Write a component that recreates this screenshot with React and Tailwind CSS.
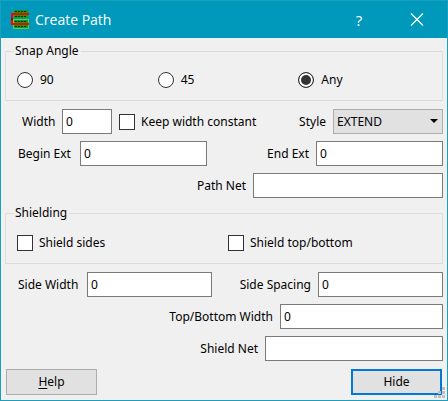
import React from "react";

const fieldClass =
  "h-[25px] min-w-0 rounded-none border border-[#7a7a7a] bg-white px-[3px] text-[12px] leading-4 text-black outline-none";
const boxClass =
  "size-4 shrink-0 appearance-none border border-[#333333] bg-white checked:bg-[#333333]";
const radioClass =
  "size-4 shrink-0 appearance-none rounded-full border border-[#333333] bg-white checked:border-[#333333] checked:bg-[#333333] checked:shadow-[inset_0_0_0_2px_#ffffff]";

function AppIcon() {
  const dots = [16, 19, 22, 25];
  return (
    <svg width="20" height="21" viewBox="10 9 20 21" shapeRendering="crispEdges" aria-hidden="true">
      <rect x="14" y="10" width="14" height="8" fill="#0aa00f" />
      <rect x="13" y="19" width="16" height="10" fill="#5fd03c" />
      <rect x="14" y="20" width="14" height="8" fill="#0aa00f" />
      {[11, 16, 21, 26].map((y) =>
        dots.map((x) => <rect key={x + "-" + y} x={x - 1} y={y} width="2" height="1" fill="#062b08" />)
      )}
      <path d="M29 14H12V24H29" fill="none" stroke="#ff0000" strokeWidth="2" />
      <rect x="11" y="18" width="2" height="2" fill="#7a1010" />
    </svg>
  );
}

function TitleBar() {
  return (
    <header className="flex h-[37px] items-center bg-[#0099bc] pl-[9px] text-white">
      <AppIcon />
      <h1 className="ml-[5px] flex-1 font-['Open_Sans','Noto_Sans',sans-serif] text-[14px] leading-[21px]">Create Path</h1>
      <button type="button" aria-label="What's this" className="mr-[5px] flex h-full w-[46px] items-center justify-center font-['Open_Sans','Noto_Sans',sans-serif] text-[15px]">
        ?
      </button>
      <button type="button" aria-label="Close" className="mx-[7px] flex h-full w-[46px] items-center justify-center">
        <svg width="14" height="13" viewBox="0 0 14 13" aria-hidden="true">
          <path d="M1 0.5L13 12.5M13 0.5L1 12.5" stroke="#ffffff" strokeWidth="1.2" />
        </svg>
      </button>
    </header>
  );
}

function Group({ title, className, children }) {
  return (
    <fieldset className={"min-w-0 border border-[#dcdcdc] pl-[11px] pr-[3px] " + className}>
      <legend className="-ml-1 px-[2px] leading-4">{title}</legend>
      {children}
    </fieldset>
  );
}

function Pair({ first, second, firstClass, secondClass }) {
  return (
    <div className="flex items-center pl-[13px]">
      <label htmlFor={first} className={"shrink-0 " + firstClass}>{first}</label>
      <input id={first} defaultValue="0" className={fieldClass + " flex-1"} />
      <label htmlFor={second} className={"shrink-0 pr-[7px] text-right " + secondClass}>{second}</label>
      <input id={second} defaultValue="0" className={fieldClass + " flex-1"} />
    </div>
  );
}

function RightField({ label, value, widthClass }) {
  return (
    <div className="flex items-center justify-end gap-[7px]">
      <label htmlFor={label}>{label}</label>
      <input id={label} defaultValue={value} className={fieldClass + " " + widthClass} />
    </div>
  );
}

export default function App() {
  return (
    <div className="relative flex min-h-screen flex-col border border-[#1a9fbf] bg-[#f0f0f0] font-['Noto_Sans',sans-serif] text-[12px] leading-4 text-black">
      <TitleBar />
      <form className="flex flex-1 flex-col px-1 pt-[5px]" onSubmit={(e) => e.preventDefault()}>
        <Group title="Snap Angle" className="h-[58px]">
          <div className="grid grid-cols-3 pt-[13px]">
            {["90", "45", "Any"].map((angle) => (
              <label key={angle} className="flex items-center gap-[7px]">
                <input type="radio" name="angle" defaultChecked={angle === "Any"} className={radioClass} />
                {angle}
              </label>
            ))}
          </div>
        </Group>

        <div className="mt-2 flex flex-col gap-[7px]">
          <div className="flex items-center pl-[17px]">
            <label htmlFor="width" className="w-10 shrink-0">Width</label>
            <input id="width" defaultValue="0" className={fieldClass + " w-[50px]"} />
            <label className="ml-[7px] flex items-center gap-[6px]">
              <input type="checkbox" className={boxClass} />
              Keep width constant
            </label>
            <label htmlFor="style" className="ml-auto mr-[7px]">Style</label>
            <div className="relative">
              <select id="style" defaultValue="EXTEND" className="block h-[25px] w-[110px] appearance-none rounded-none border border-[#adadad] bg-[#e1e1e1] px-[3px] text-[12px] leading-4 outline-none">
                <option>EXTEND</option>
                <option>TRUNCATE</option>
              </select>
              <svg width="8" height="4" viewBox="0 0 8 4" className="pointer-events-none absolute right-[5px] top-[10px]" aria-hidden="true">
                <path d="M0 0H8L4 4Z" fill="#000000" />
              </svg>
            </div>
          </div>
          <Pair first="Begin Ext" second="End Ext" firstClass="w-[62px]" secondClass="w-[109px]" />
          <RightField label="Path Net" value="" widthClass="w-[190px]" />
        </div>

        <Group title="Shielding" className="mt-[7px] h-[59px]">
          <div className="grid grid-cols-2 pt-[14px]">
            {["Shield sides", "Shield top/bottom"].map((name) => (
              <label key={name} className="flex items-center gap-[6px]">
                <input type="checkbox" className={boxClass} />
                {name}
              </label>
            ))}
          </div>
        </Group>

        <div className="mt-2 flex flex-col gap-[7px]">
          <Pair first="Side Width" second="Side Spacing" firstClass="w-[69px]" secondClass="w-[106px]" />
          <RightField label="Top/Bottom Width" value="0" widthClass="w-[163px]" />
          <RightField label="Shield Net" value="" widthClass="w-[178px]" />
        </div>

        <div className="mb-[5px] mt-2 flex justify-between px-px">
          <button type="button" className="h-[26px] w-[91px] border border-[#adadad] bg-[#e1e1e1]">
            <span className="underline underline-offset-2">H</span>elp
          </button>
          <button type="button" className="h-[26px] w-[91px] border-2 border-[#0078d7] bg-[#e1e1e1]">Hide</button>
        </div>
      </form>
      <svg width="11" height="11" viewBox="0 0 11 11" fill="#bfbfbf" shapeRendering="crispEdges" className="pointer-events-none absolute bottom-[2px] right-[2px]" aria-hidden="true">
        <path d="M8 0h3v3h-3zM4 4h3v3h-3zM8 4h3v3h-3zM0 8h3v3h-3zM4 8h3v3h-3zM8 8h3v3h-3z" />
      </svg>
    </div>
  );
}
